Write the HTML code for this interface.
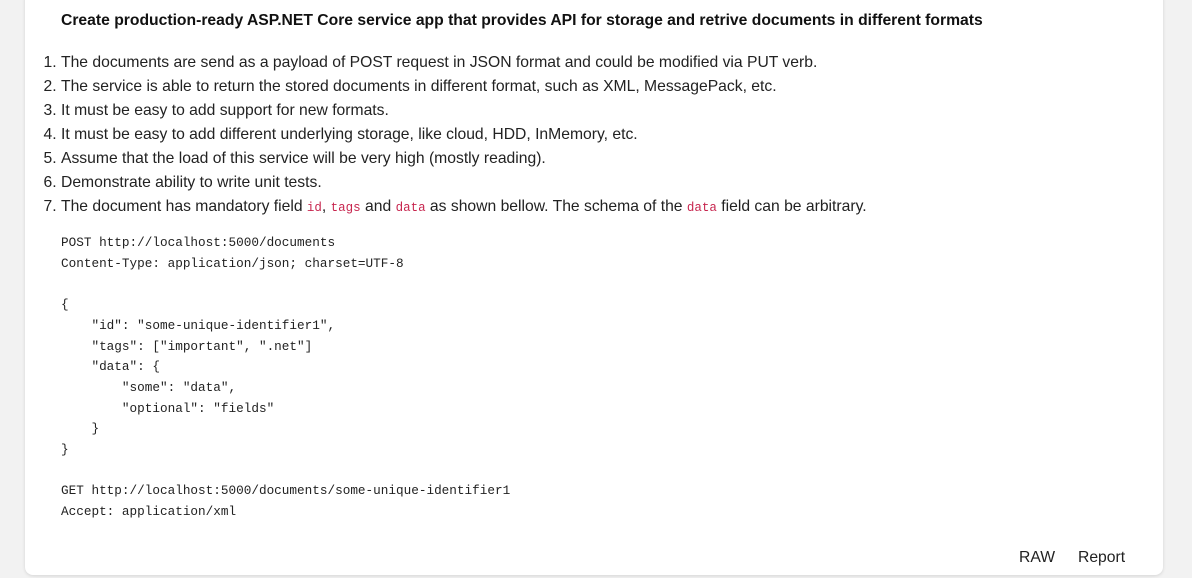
<!DOCTYPE html>
<html><head><style>
body{margin:0;width:1192px;height:578px;background:#f2f2f2;overflow:hidden;font-family:"Liberation Sans",sans-serif;color:#1f1f1f}
.card{position:absolute;left:25px;top:-10px;width:1138px;height:585px;background:#fff;border-radius:8px;box-shadow:0 1px 3px rgba(0,0,0,.12)}
h1{position:absolute;left:36px;top:22px;margin:0;font-size:15.7px;font-weight:bold;color:#111;white-space:nowrap}
ol{position:absolute;left:15px;top:61px;margin:0;padding-left:21px;font-size:15.7px;line-height:24px;color:#222;white-space:nowrap}
code{font-family:"Liberation Mono",monospace;font-size:12.5px;color:#c7254e}
pre{position:absolute;left:36px;top:243px;margin:0;font-family:"Liberation Mono",monospace;font-size:12.7px;line-height:20.7px;color:#222}
.f{position:absolute;top:559px;font-size:15.7px;color:#222}
</style></head><body>
<div class="card">
<h1>Create production-ready ASP.NET Core service app that provides API for storage and retrive documents in different formats</h1>
<ol>
<li>The documents are send as a payload of POST request in JSON format and could be modified via PUT verb.</li>
<li>The service is able to return the stored documents in different format, such as XML, MessagePack, etc.</li>
<li>It must be easy to add support for new formats.</li>
<li>It must be easy to add different underlying storage, like cloud, HDD, InMemory, etc.</li>
<li>Assume that the load of this service will be very high (mostly reading).</li>
<li>Demonstrate ability to write unit tests.</li>
<li>The document has mandatory field <code>id</code>, <code>tags</code> and <code>data</code> as shown bellow. The schema of the <code>data</code> field can be arbitrary.</li>
</ol>
<pre>POST http://localhost:5000/documents
Content-Type: application/json; charset=UTF-8

{
    "id": "some-unique-identifier1",
    "tags": ["important", ".net"]
    "data": {
        "some": "data",
        "optional": "fields"
    }
}

GET http://localhost:5000/documents/some-unique-identifier1
Accept: application/xml</pre>
<span class="f" style="left:994px">RAW</span>
<span class="f" style="left:1053px">Report</span>
</div>
</body></html>
